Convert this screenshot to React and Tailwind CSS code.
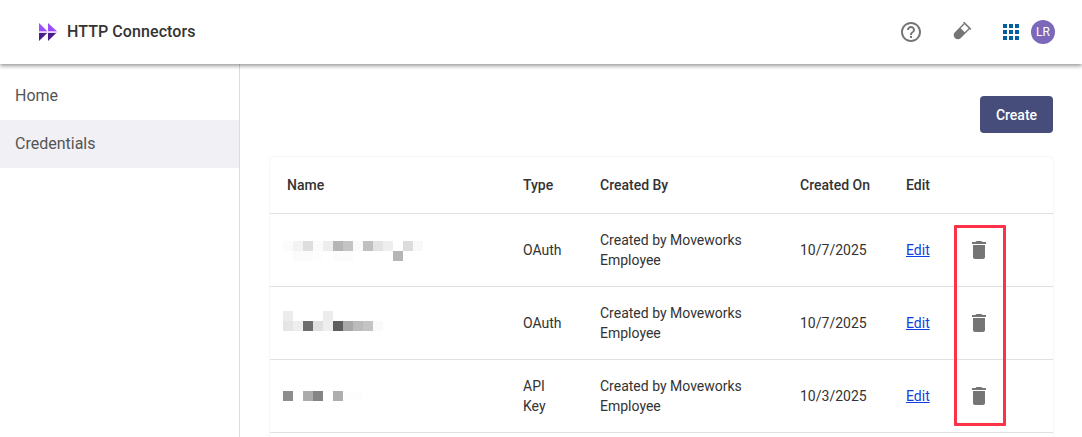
const HELP = "M11 18h2v-2h-2v2zm1-16C6.48 2 2 6.48 2 12s4.48 10 10 10 10-4.48 10-10S17.52 2 12 2zm0 18c-4.41 0-8-3.59-8-8s3.59-8 8-8 8 3.59 8 8-3.59 8-8 8zm0-14c-2.21 0-4 1.79-4 4h2c0-1.1.9-2 2-2s2 .9 2 2c0 2-3 1.75-3 5h2c0-2.25 3-2.5 3-5 0-2.21-1.79-4-4-4z";
const APPS = "M4 8h4V4H4v4zm6 12h4v-4h-4v4zm-6 0h4v-4H4v4zm0-6h4v-4H4v4zm6 0h4v-4h-4v4zm6-10v4h4V4h-4zm-6 4h4V4h-4v4zm6 6h4v-4h-4v4zm0 6h4v-4h-4v4z";
const TRASH = "M6 19c0 1.1.9 2 2 2h8c1.1 0 2-.9 2-2V7H6v12zM19 4h-3.5l-1-1h-5l-1 1H5v2h14V4z";

const rows = [
  {
    type: ["OAuth"],
    date: "10/7/2025",
    offset: 1,
    mosaic: [
      [0, 0, "#fbfbfb"], [1, 0, "#f3f3f3"], [2, 0, "#dedede"], [3, 0, "#fbfbfb"], [4, 0, "#ededed"], [5, 0, "#b5b5b5"], [6, 0, "#c4c4c4"], [7, 0, "#fafafa"], [8, 0, "#c0c0c0"], [9, 0, "#e3e3e3"], [10, 0, "#eeeeee"], [12, 0, "#dcdcdc"], [13, 0, "#f8f8f8"],
      [1, 1, "#fbfbfb"], [2, 1, "#fbfbfb"], [3, 1, "#fdfdfd"], [5, 1, "#fcfcfc"], [6, 1, "#fcfcfc"], [11, 1, "#b5b5b5"],
    ],
  },
  {
    type: ["OAuth"],
    date: "10/7/2025",
    offset: -2,
    mosaic: [
      [0, 0, "#ececec"], [4, 0, "#ececec"],
      [0, 1, "#e5e5e5"], [1, 1, "#eeeeee"], [2, 1, "#6d6d6d"], [3, 1, "#e0e0e0"], [4, 1, "#eeeeee"], [5, 1, "#5e5e5e"], [6, 1, "#a8a8a8"], [7, 1, "#bbbbbb"], [8, 1, "#c4c4c4"], [9, 1, "#fafafa"],
    ],
  },
  {
    type: ["API", "Key"],
    date: "10/3/2025",
    offset: 5,
    mosaic: [
      [0, 0, "#8e8e8e"], [2, 0, "#ababab"], [3, 0, "#858585"], [5, 0, "#aeaeae"], [6, 0, "#fdfdfd"], [7, 0, "#fdfdfd"],
    ],
  },
];

function Mosaic({ cells, offset }) {
  return (
    <svg width="150" height="20" viewBox="0 0 150 20" className="block overflow-visible" shapeRendering="crispEdges">
      {cells.map(([x, y, fill]) => (
        <rect key={`${x}-${y}`} x={x * 10} y={y * 10 + offset} width="10" height="10" fill={fill} />
      ))}
    </svg>
  );
}

function Logo() {
  return (
    <svg width="19" height="18" viewBox="0 0 19 18" className="block">
      <path d="M0 0 L8.6 8.5 H0 Z" fill="#9b4dff" />
      <path d="M9 0 L18.2 8.5 H9 Z" fill="#9b4dff" />
      <path d="M0 18 L8.2 10 H0 Z" fill="#4a1d8c" />
      <path d="M9 18 L17.2 10 H9 Z" fill="#4a1d8c" />
      <path d="M0 8.5 H18.6 L18.2 10 H0 Z" fill="#e6dcf7" />
    </svg>
  );
}

function TestTube() {
  return (
    <svg width="24" height="24" viewBox="0 0 24 24" className="block" fill="#757575">
      <g transform="rotate(45 12 12)">
        <rect x="6.8" y="2.4" width="10.4" height="1.6" rx="0.5" />
        <path d="M7.8 4 H9.2 V9.6 H14.8 V4 H16.2 V16.4 A4.2 4.2 0 0 1 7.8 16.4 Z" />
      </g>
    </svg>
  );
}

export default function App() {
  return (
    <div className="relative h-[437px] w-[1082px] overflow-hidden bg-white font-['Roboto',sans-serif] text-sm text-[#333333]">
      <header className="relative z-10 flex h-[64px] items-center bg-white pl-[39px] pr-[27px] shadow-[0_2px_4px_rgba(0,0,0,0.4)]">
        <Logo />
        <span className="ml-[9px] text-base font-medium leading-none tracking-[0.005em] text-[#333333]">HTTP Connectors</span>
        <div className="ml-auto flex items-center">
          <svg width="24" height="24" viewBox="0 0 24 24" fill="#757575" className="block">
            <path d={HELP} />
          </svg>
          <div className="ml-[26px]">
            <TestTube />
          </div>
          <svg width="24" height="24" viewBox="0 0 24 24" fill="#005f9e" className="ml-[26px] block">
            <path d={APPS} />
          </svg>
          <div className="ml-2 flex h-6 w-6 items-center justify-center rounded-full bg-[#7b68b8] text-xs text-white">LR</div>
        </div>
      </header>

      <div className="flex h-[373px]">
        <aside className="w-[240px] shrink-0 border-r border-[#dcdcdc] pt-[8px] text-base text-[#555555]">
          <div className="flex h-[48px] items-center px-[15px]">Home</div>
          <div className="flex h-[48px] items-center bg-[#f0f0f5] px-[15px]">Credentials</div>
        </aside>

        <main className="min-w-0 flex-1 pl-[30px] pr-[29px] pt-[32px]">
          <div className="flex justify-end">
            <button className="h-[37px] w-[73px] rounded bg-[#474d7a] text-sm font-medium text-white">Create</button>
          </div>
          <div className="mt-[24px] w-[783px] rounded-t bg-white shadow-[0_0_2px_rgba(0,0,0,0.12)]">
            <table className="w-full table-fixed border-collapse text-left">
              <colgroup>
                <col className="w-[236px]" />
                <col className="w-[77px]" />
                <col className="w-[200px]" />
                <col className="w-[106px]" />
                <col className="w-[64px]" />
                <col />
              </colgroup>
              <thead>
                <tr className="h-[56px] border-b border-[#e0e0e0]">
                  <th className="pl-[17px] pt-[1px] font-medium">Name</th>
                  <th className="pl-[17px] pt-[1px] font-medium">Type</th>
                  <th className="pl-[17px] pt-[1px] font-medium">Created By</th>
                  <th className="pl-[17px] pt-[1px] font-medium">Created On</th>
                  <th className="pl-[17px] pt-[1px] font-medium">Edit</th>
                  <th />
                </tr>
              </thead>
              <tbody>
                {rows.map((row, i) => (
                  <tr key={i} className="h-[73px] border-b border-[#e0e0e0]">
                    <td className="pl-[13px]">
                      <Mosaic cells={row.mosaic} offset={row.offset} />
                    </td>
                    <td className="pl-[17px] leading-5">
                      {row.type.map((t) => (
                        <div key={t}>{t}</div>
                      ))}
                    </td>
                    <td className="pl-[17px] leading-5">
                      Created by Moveworks
                      <br />
                      Employee
                    </td>
                    <td className="pl-[17px]">{row.date}</td>
                    <td className="pl-[17px]">
                      <a href="#" className="text-[#0f3fe0] underline">Edit</a>
                    </td>
                    <td className="pl-[14px]">
                      <svg width="24" height="24" viewBox="0 0 24 24" fill="#757575" className="block">
                        <path d={TRASH} />
                      </svg>
                    </td>
                  </tr>
                ))}
                <tr className="h-[73px]">
                  <td colSpan={6} />
                </tr>
              </tbody>
            </table>
          </div>
        </main>
      </div>

      <div className="absolute left-[954px] top-[225px] z-20 h-[201px] w-[52px] rounded-[1px] border-[3px] border-[#fb3248]" />
    </div>
  );
}
